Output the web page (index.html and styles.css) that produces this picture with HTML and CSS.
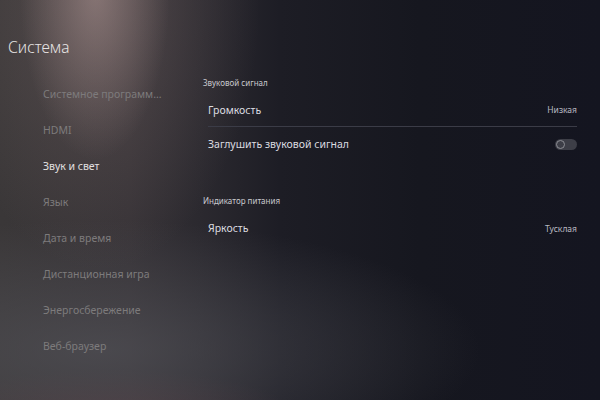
FILE: index.html
```html
<!DOCTYPE html>
<html lang="ru">
<head>
<meta charset="utf-8">
<link rel="stylesheet" href="styles.css">
</head>
<body>
<div class="screen">
  <aside class="sidebar">
    <h1 class="title">Система</h1>
    <ul class="menu">
      <li class="menu-item">Системное программ...</li>
      <li class="menu-item">HDMI</li>
      <li class="menu-item active">Звук и свет</li>
      <li class="menu-item">Язык</li>
      <li class="menu-item">Дата и время</li>
      <li class="menu-item">Дистанционная игра</li>
      <li class="menu-item">Энергосбережение</li>
      <li class="menu-item">Веб-браузер</li>
    </ul>
  </aside>
  <main class="content">
    <section class="group">
      <h2 class="group-title">Звуковой сигнал</h2>
      <div class="row divided">
        <span class="label">Громкость</span>
        <span class="value">Низкая</span>
      </div>
      <div class="row">
        <span class="label">Заглушить звуковой сигнал</span>
        <span class="toggle"><span class="knob"></span></span>
      </div>
    </section>
    <section class="group second">
      <h2 class="group-title">Индикатор питания</h2>
      <div class="row">
        <span class="label">Яркость</span>
        <span class="value">Тусклая</span>
      </div>
    </section>
  </main>
</div>
</body>
</html>
```

FILE: styles.css
```css
* { box-sizing: border-box; margin: 0; padding: 0; }
html, body { width: 600px; height: 400px; overflow: hidden; }
body {
  font-family: "Noto Sans", "Open Sans", sans-serif;
  background:
    radial-gradient(ellipse 75px 170px at 95px -10px, rgba(175,150,148,0.55), rgba(175,150,148,0) 100%),
    radial-gradient(ellipse 160px 270px at 100px 0px, rgba(140,120,118,0.35), rgba(140,120,118,0) 100%),
    radial-gradient(ellipse 380px 130px at 100px 350px, rgba(84,84,90,0.65), rgba(84,84,90,0) 100%),
    radial-gradient(ellipse 180px 40px at 110px 410px, rgba(90,60,66,0.5), rgba(90,60,66,0) 100%),
    linear-gradient(to right, #3a3738 0px, #363236 130px, #2b292f 200px, #1d1d25 280px, #16171f 420px, #141520 600px);
  color: #ddd;
}
.screen { display: flex; width: 600px; height: 400px; }
.sidebar { width: 190px; flex: none; padding-top: 36px; }
.title {
  font-weight: 300;
  font-size: 15.5px;
  line-height: 22px;
  color: #e6e4e4;
  padding-left: 8px;
}
.menu { list-style: none; padding-left: 43px; margin-top: 18px; }
.menu-item {
  height: 36px;
  line-height: 36px;
  font-size: 10.5px;
  color: #7d7b7c;
  white-space: nowrap;
}
.menu-item.active { color: #e2e0e0; }
.content { flex: 1; padding: 75px 23px 0 13px; }
.group-title {
  font-weight: 400;
  font-size: 8px;
  line-height: 16px;
  margin-bottom: 2px;
  color: #c9c9cf;
}
.row {
  display: flex;
  align-items: center;
  justify-content: space-between;
  height: 34px;
  margin-left: 5px;
}
.row.divided { border-bottom: 1px solid #3b3c47; }
.label { font-size: 10.5px; color: #dcdce0; }
.value { font-size: 8.5px; color: #b9b9c0; }
.group.second { margin-top: 32px; }
.toggle {
  width: 22px; height: 11px;
  border-radius: 6px;
  background: #3d3e47;
  display: flex; align-items: center;
  padding-left: 1px;
}
.knob {
  width: 9px; height: 9px;
  border-radius: 50%;
  border: 1.5px solid #8d8e95;
  background: #3d3e47;
}
```
